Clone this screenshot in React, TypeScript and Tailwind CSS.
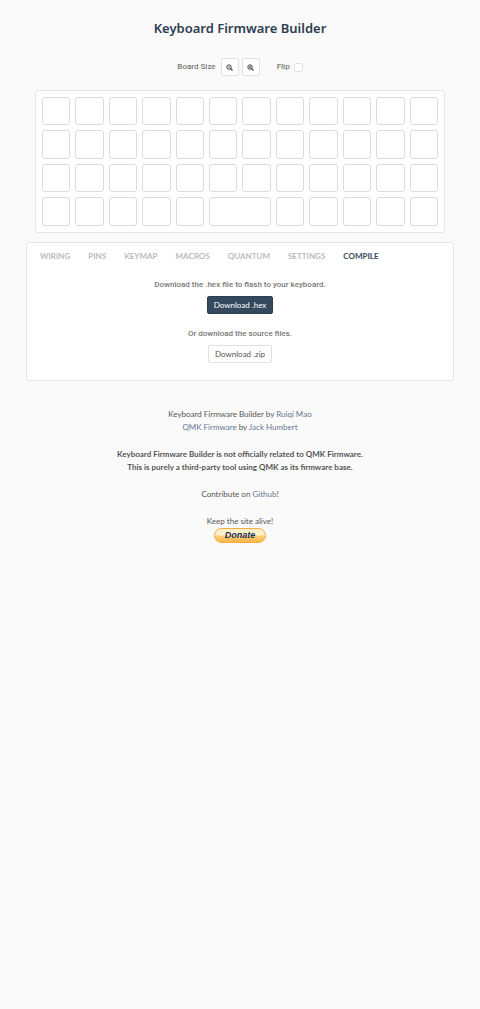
import React, { useState } from 'react';

const TABS = ['WIRING', 'PINS', 'KEYMAP', 'MACROS', 'QUANTUM', 'SETTINGS', 'COMPILE'];

// Widths of the keys in each row, in key units
const ROWS = [
  [1, 1, 1, 1, 1, 1, 1, 1, 1, 1, 1, 1],
  [1, 1, 1, 1, 1, 1, 1, 1, 1, 1, 1, 1],
  [1, 1, 1, 1, 1, 1, 1, 1, 1, 1, 1, 1],
  [1, 1, 1, 1, 1, 2, 1, 1, 1, 1, 1],
];

const ZoomIcon: React.FC<{ plus?: boolean }> = ({ plus }) => (
  <svg width="7" height="7" viewBox="0 0 14 14" fill="none" stroke="currentColor" aria-hidden="true">
    <circle cx="6" cy="6" r="4.4" strokeWidth="2" />
    <path d="M9 9l4 4" strokeWidth="2.6" />
    <path d={plus ? 'M3.8 6h4.4M6 3.8v4.4' : 'M3.8 6h4.4'} strokeWidth="1.6" />
  </svg>
);

const Controls: React.FC = () => {
  const [flipped, setFlipped] = useState(false);
  const sizeButton =
    'flex h-[18px] w-[18px] items-center justify-center rounded-[2px] border border-[#e1e1e1] bg-white text-[#444]';

  return (
    <div className="mt-5 flex items-center justify-center font-['Roboto',sans-serif] text-[8px] font-medium text-[#777]">
      <span className="mr-[5px]">Board Size</span>
      <div className="flex gap-[3px]">
        <button className={sizeButton} aria-label="Decrease board size">
          <ZoomIcon />
        </button>
        <button className={sizeButton} aria-label="Increase board size">
          <ZoomIcon plus />
        </button>
      </div>
      <label htmlFor="flip" className="mr-1 ml-[17px]">Flip</label>
      <input
        id="flip"
        type="checkbox"
        checked={flipped}
        onChange={(e) => setFlipped(e.target.checked)}
        className="h-[9px] w-[9px] appearance-none rounded-[2px] border border-[#e1e1e1] bg-white checked:bg-[#34495e]"
      />
    </div>
  );
};

const Keyboard: React.FC = () => (
  <div className="mx-[9px] mt-[14px] grid grid-cols-12 gap-[5px] rounded-[3px] border border-[#e6e6e6] bg-white p-[6px]">
    {ROWS.map((row, r) =>
      row.map((width, c) => (
        <button
          key={`${r}-${c}`}
          aria-label={`Key ${r + 1}, ${c + 1}`}
          className={
            width === 2
              ? 'col-span-2 rounded-[3px] border border-[#dcdcdc] bg-white'
              : 'aspect-square rounded-[3px] border border-[#dcdcdc] bg-white'
          }
        />
      ))
    )}
  </div>
);

const Panel: React.FC = () => {
  const [active, setActive] = useState('COMPILE');

  return (
    <div className="mt-[9px] rounded-[3px] border border-[#e6e6e6] bg-white pb-[17px]">
      <nav className="flex gap-[18px] px-[13px] pt-[7px]">
        {TABS.map((tab) => (
          <button
            key={tab}
            onClick={() => setActive(tab)}
            className={
              tab === active
                ? 'text-[8px] leading-3 font-bold text-[#34495e]'
                : 'text-[8px] leading-3 font-bold text-[#bbb]'
            }
          >
            {tab}
          </button>
        ))}
      </nav>

      <div className="mt-[17px] flex flex-col items-center">
        <h2 className="font-['Roboto',sans-serif] text-[8px] leading-3 font-medium text-[#777]">
          Download the .hex file to flash to your keyboard.
        </h2>
        <button className="mt-[5px] h-[18px] rounded-[2px] border border-[#2c3e50] bg-[#34495e] px-[6px] text-[8px] text-white">
          Download .hex
        </button>
        <h2 className="mt-[14px] font-['Roboto',sans-serif] text-[8px] leading-3 font-medium text-[#777]">
          Or download the source files.
        </h2>
        <button className="mt-[5px] h-[18px] rounded-[2px] border border-[#e1e1e1] bg-white px-[6px] text-[8px] text-[#555]">
          Download .zip
        </button>
      </div>
    </div>
  );
};

const Footer: React.FC = () => {
  const link = 'text-[#667892]';

  return (
    <footer className="mt-[27px] flex flex-col items-center gap-[14px] text-center text-[8px] leading-[13px] text-[#555]">
      <p>
        Keyboard Firmware Builder by <a href="#ruiqi" className={link}>Ruiqi Mao</a>
        <br />
        <a href="#qmk" className={link}>QMK Firmware</a> by <a href="#jack" className={link}>Jack Humbert</a>
      </p>
      <p className="font-bold">
        Keyboard Firmware Builder is not officially related to QMK Firmware.
        <br />
        This is purely a third-party tool using QMK as its firmware base.
      </p>
      <p>
        Contribute on <a href="#github" className={link}>Github</a>!
      </p>
      <div className="flex flex-col items-center">
        <p>Keep the site alive!</p>
        <button className="flex h-[15px] w-[52px] items-center justify-center rounded-full border border-[#f5ac43] bg-linear-to-b from-[#fff0c8] from-45% via-[#ffcf7a] via-55% to-[#ffb544] font-['Liberation_Sans',sans-serif] text-[9px] leading-3 font-bold text-[#16325c] italic">
          Donate
        </button>
      </div>
    </footer>
  );
};

const App: React.FC = () => (
  <div className="min-h-screen bg-[#fafafa] px-[26px] pt-[18px] font-['Lato',sans-serif]">
    <h1 className="text-center font-['Noto_Sans',sans-serif] text-[13px] leading-5 font-semibold text-[#2c3e50]">
      Keyboard Firmware Builder
    </h1>
    <Controls />
    <Keyboard />
    <Panel />
    <Footer />
  </div>
);

export default App;
